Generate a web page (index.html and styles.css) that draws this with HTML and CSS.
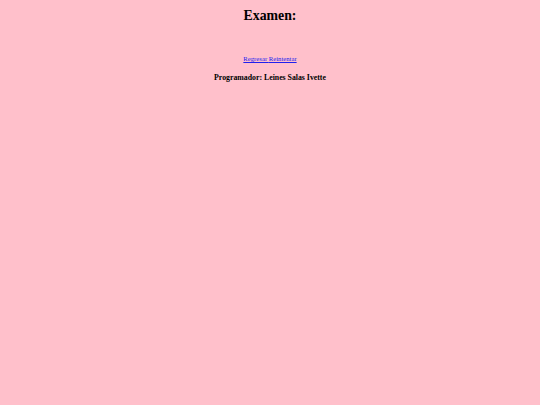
FILE: index.html
```html
<!DOCTYPE html>
<html lang="es">
<head>
<meta charset="utf-8">
<title>Examen</title>
<link rel="stylesheet" href="styles.css">
</head>
<body>
<div class="page">
  <h1 class="title">Examen:</h1>
  <p class="links"><a href="#">Regresar </a><a href="#">Reintentar</a></p>
  <h3 class="author">Programador: Leines Salas Ivette</h3>
</div>
</body>
</html>
```
FILE: styles.css
```css
html, body {
  margin: 0;
  padding: 0;
  background: #ffc0cb;
}
body {
  font-family: "Liberation Serif", "Times New Roman", serif;
  color: #000;
}
.page {
  display: flex;
  flex-direction: column;
  align-items: center;
  padding-top: 9.2px;
}
.title {
  margin: 0;
  font-size: 13.8px;
  line-height: 1;
  font-weight: bold;
}
.links {
  margin: 33.4px 0 0;
  font-size: 6.7px;
  line-height: 1;
}
.links a {
  color: #2020ee;
}
.author {
  margin: 10.7px 0 0;
  font-size: 7.8px;
  line-height: 1;
  font-weight: bold;
}
```
